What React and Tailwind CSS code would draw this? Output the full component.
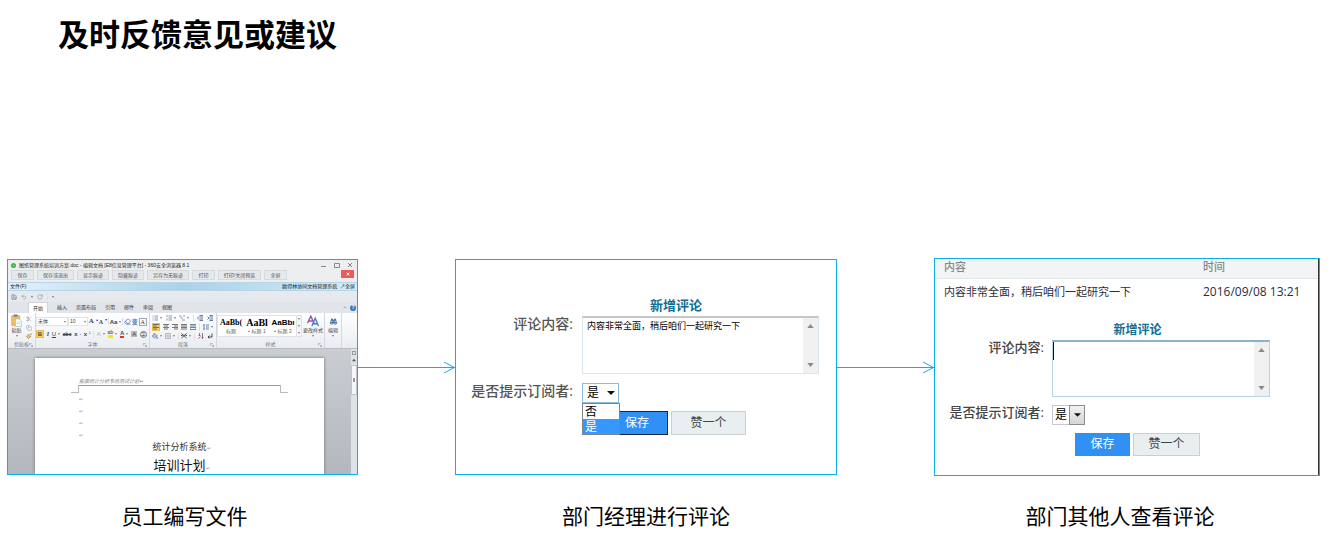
import { Fragment } from "react";
import { Binoculars, Copy, Eraser, Paintbrush, PaintBucket, RotateCw, Save, Scissors, Undo2 } from "lucide-react";

const SANS = "font-['Open_Sans','Noto_Sans_CJK_SC',sans-serif]";

const WINDOW_BUTTONS = [
  { label: "保存", width: "w-[23px]" },
  { label: "保存或退出", width: "w-[37px]" },
  { label: "显示痕迹", width: "w-8" },
  { label: "隐藏痕迹", width: "w-8" },
  { label: "另存为无痕迹", width: "w-[42px]" },
  { label: "打印", width: "w-[23px]" },
  { label: "打印/关闭预览", width: "w-[43px]" },
  { label: "全屏", width: "w-[23px]" },
];

const RIBBON_TABS = ["插入", "页面布局", "引用", "邮件", "审阅", "视图"];

const STYLES = [
  { sample: "AaBb(", name: "标题", font: "font-['Liberation_Serif',serif] text-[8px]" },
  { sample: "AaBl", name: "▪ 标题 1", font: "font-['Liberation_Serif',serif] text-[10px]" },
  { sample: "AaBbı", name: "▪ 标题 2", font: "font-['Liberation_Sans',sans-serif] text-[8px]" },
];

/* Ribbon pieces */

function Caret() {
  return (
    <svg viewBox="0 0 4 3" className="w-[2px] h-[2px] shrink-0" aria-hidden="true">
      <path d="M0 0h4L2 3z" fill="#555" />
    </svg>
  );
}

function Divider() {
  return <span className="w-px h-[7px] bg-[#dcdfe3] shrink-0" />;
}

function Tool({ label, active, caret, children }) {
  return (
    <button
      aria-label={label}
      className={`flex items-center justify-center gap-[2px] h-[8px] shrink-0 text-[6px] leading-none ${
        active ? "w-[8px] bg-[#fbd45c] border border-[#e9bd55]" : ""
      }`}
    >
      {children}
      {caret && <Caret />}
    </button>
  );
}

function Lines({ d, color = "#555" }) {
  return (
    <svg viewBox="0 0 12 12" className="w-[6px] h-[6px] shrink-0" fill="none" stroke={color} strokeWidth="1.6" aria-hidden="true">
      <path d={d} />
    </svg>
  );
}

function Group({ name, className, children }) {
  return (
    <div className={`flex flex-col border-r border-[#d5d9de] ${className}`}>
      <div className="flex-1 min-h-0">{children}</div>
      <div className="relative h-[7px] text-center text-[5px] leading-[7px] text-[#777]">
        {name}
        {name && (
          <svg viewBox="0 0 6 6" className="absolute right-[2px] top-[2px] w-[4px] h-[4px]" fill="none" stroke="#999" aria-hidden="true">
            <path d="M.5 4V.5H4M2.500 2.500l3 3M5.500 3v2.500H3" />
          </svg>
        )}
      </div>
    </div>
  );
}

function Ribbon() {
  return (
    <div className="flex h-[36px] bg-linear-to-b from-white to-[#e9ecf0] border-b border-[#b9bdc2] text-[#444]">
      <Group name="剪贴板" className="w-[28px]">
        <div className="flex justify-between h-full px-[3px] pt-[1px]">
          <button className="flex flex-col items-center text-[5px] leading-[6px]">
            <svg viewBox="0 0 20 24" className="w-[11px] h-[13px]" aria-hidden="true">
              <rect x="1" y="3" width="15" height="18" rx="1" fill="#f2c063" stroke="#cf9838" />
              <rect x="5" y="1" width="7" height="4" fill="#777f8b" />
              <path d="M8 9h7l4 4v10H8z" fill="#fff" stroke="#8fa6c4" />
              <path d="M10 15h7M10 18h7" stroke="#a9bcd4" />
            </svg>
            粘贴
            <span className="mt-[2px]"><Caret /></span>
          </button>
          <div className="flex flex-col justify-between py-[1px]">
            <Tool label="剪切"><Scissors size={6} color="#8a8f96" /></Tool>
            <Tool label="复制"><Copy size={6} color="#9a9fa6" /></Tool>
            <Tool label="格式刷"><Paintbrush size={6} color="#c28a2c" strokeWidth={3} /></Tool>
          </div>
        </div>
      </Group>

      <Group name="字体" className="w-[114px]">
        <div className="flex flex-col gap-[4px] pt-[4px] pr-[2px]">
          <div className="flex items-center justify-between">
            <div className="flex">
              <button className="flex items-center justify-between w-[32px] h-[9px] px-[1px] bg-white border border-[#e1e4e8] text-[5px]">
                宋体 <Caret />
              </button>
              <button className="flex items-center justify-between w-[20px] h-[9px] px-[1px] bg-white border border-[#e1e4e8] text-[5px]">
                10 <Caret />
              </button>
            </div>
            <Tool label="增大字体"><b className="text-[7px] font-['Liberation_Serif',serif]">A</b><sup className="text-[4px] text-blue-700">▴</sup></Tool>
            <Tool label="缩小字体"><b className="font-['Liberation_Serif',serif]">A</b><sup className="text-[4px] text-blue-700">▾</sup></Tool>
            <Divider />
            <Tool label="更改大小写" caret><b>Aa</b></Tool>
            <Divider />
            <Tool label="清除格式"><Eraser size={7} color="#5c87c2" strokeWidth={3} /></Tool>
            <Tool label="拼音指南"><b className="text-[#3a6fb5]">变</b></Tool>
            <Tool label="字符边框"><span className="border border-[#9aa9c0] px-[1px] font-['Liberation_Serif',serif]">A</span></Tool>
          </div>
          <div className="flex items-center justify-between">
            <Tool label="加粗" active><b>B</b></Tool>
            <Tool label="倾斜"><i className="font-bold font-['Liberation_Serif',serif]">I</i></Tool>
            <Tool label="下划线" caret><u>U</u></Tool>
            <Tool label="删除线"><s className="font-bold text-[5px]">abc</s></Tool>
            <Tool label="下标"><b>x</b><span className="text-[4px] text-blue-700">₂</span></Tool>
            <Tool label="上标"><b>x</b><span className="text-[4px] text-blue-700">²</span></Tool>
            <Divider />
            <Tool label="文本效果" caret><span className="text-[#a8b0bb]">A</span></Tool>
            <Tool label="突出显示" caret><b className="border-b-3 border-[#f6e51e] text-[#666] text-[5px]">ab</b></Tool>
            <Tool label="字体颜色" caret><b className="border-b-2 border-[#e33128] text-[#36507c]">A</b></Tool>
            <Tool label="字符底纹"><span className="bg-[#bbb] px-[1px]">A</span></Tool>
            <Tool label="带圈字符"><span className="rounded-full border border-[#777] text-[5px]">字</span></Tool>
          </div>
        </div>
      </Group>

      <Group name="段落" className="w-[67px]">
        <div className="flex flex-col gap-[1px] pt-[1px] pl-[2px] pr-[3px]">
          <div className="flex items-center justify-between">
            <Tool label="项目符号" caret><Lines d="M1 2h2M1 6h2M1 10h2M5 2h7M5 6h7M5 10h7" color="#6581a8" /></Tool>
            <Tool label="编号" caret><Lines d="M2 0v4M2 7v4M5 2h7M5 6h7M5 10h7" color="#6581a8" /></Tool>
            <Tool label="多级列表" caret><Lines d="M0 2h5M3 6h5M6 10h6M8 2h4" color="#6581a8" /></Tool>
            <Divider />
            <Tool label="减少缩进"><Lines d="M5 1h7M5 4h7M5 8h7M5 11h7M4 3L1 6l3 3" color="#3a5a8c" /></Tool>
            <Tool label="增加缩进"><Lines d="M5 1h7M5 4h7M5 8h7M5 11h7M1 3l3 3-3 3" color="#3a5a8c" /></Tool>
          </div>
          <div className="flex items-center justify-between">
            <Tool label="左对齐" active><Lines d="M0 1h12M0 4h8M0 7h12M0 10h8" /></Tool>
            <Tool label="居中"><Lines d="M0 1h12M2 4h8M0 7h12M2 10h8" /></Tool>
            <Tool label="右对齐"><Lines d="M0 1h12M4 4h8M0 7h12M4 10h8" /></Tool>
            <Tool label="两端对齐"><Lines d="M0 1h12M0 4h12M0 7h12M0 10h12" /></Tool>
            <Tool label="分散对齐"><Lines d="M0 1h12M0 4h12M0 7h12M1 9v3M11 9v3M1 11h10" color="#466797" /></Tool>
            <Divider />
            <Tool label="行距" caret><Lines d="M2 1v10M0 3l2-2 2 2M0 9l2 2 2-2M6 2h6M6 6h6M6 10h6" color="#466797" /></Tool>
          </div>
          <div className="flex items-center justify-between">
            <Tool label="底纹" caret><PaintBucket size={6} color="#55749f" strokeWidth={3} /></Tool>
            <Tool label="边框" caret><Lines d="M1 1h10v10H1zM6 1v10M1 6h10" color="#aaa" /></Tool>
            <Divider />
            <Tool label="中文版式" caret><Lines d="M1 1l10 9M11 1L1 10M0 5h3M9 5h3" color="#222" /></Tool>
            <Divider />
            <Tool label="排序"><Lines d="M3 0v5M1 5h4M1 11l4-4M9 0v11M7 9l2 2 2-2" color="#7d4b78" /></Tool>
            <Tool label="编辑标记"><Lines d="M10 1v7H3M5 5L2 8l3 3" color="#222" /></Tool>
          </div>
        </div>
      </Group>

      <Group name="样式" className="flex-1">
        <div className="flex h-full pt-[2px]">
          <div className="flex flex-1 h-[22px] bg-white border border-[#dfe2e6] overflow-hidden">
            {STYLES.map((s) => (
              <button key={s.name} className="flex-1 min-w-0 text-[5px] leading-[7px] text-[#666]">
                <span className={`block h-[11px] leading-[11px] font-bold text-black whitespace-nowrap overflow-hidden ${s.font}`}>{s.sample}</span>
                {s.name}
              </button>
            ))}
            <div className="flex flex-col justify-around items-center w-[5px] bg-[#f3f5f7] border-l border-[#dfe2e6]">
              <Caret />
              <Caret />
              <Caret />
            </div>
          </div>
          <button className="flex flex-col items-center w-[22px] text-[5px] leading-[6px] whitespace-nowrap">
            <svg viewBox="0 0 22 20" className="w-[12px] h-[12px]" fill="none" strokeWidth="2.500" aria-hidden="true">
              <path d="M1 14L7 1l6 13M3 10h8" stroke="#a54fb5" />
              <path d="M9 19l6-14 6 14M11 15h8" stroke="#3f7fd0" />
            </svg>
            更改样式
            <span className="mt-[2px]"><Caret /></span>
          </button>
        </div>
      </Group>

      <Group name="" className="w-[17px]">
        <button className="flex flex-col items-center w-full pt-[2px] text-[5px] leading-[6px]">
          <span className="flex items-center h-[12px]"><Binoculars size={7} color="#2f6190" strokeWidth={3} /></span>
          编辑
          <span className="mt-[2px]"><Caret /></span>
        </button>
      </Group>
      <div className="w-[15px]" />
    </div>
  );
}

function EditorPanel() {
  return (
    <section className="flex flex-col h-[216px] border border-[#0eaeea] bg-[#eceef0] overflow-hidden font-['Liberation_Sans','Noto_Sans_CJK_SC',sans-serif] text-[5px] leading-none text-[#333]">
      <div className="flex items-center h-[10px] px-[3px] gap-[3px]">
        <span className="w-[5px] h-[5px] rounded-full border-2 border-[#43b649]" />
        <span className="whitespace-nowrap text-[#222]">图纸管理系统培训方案.doc - 编辑文档 [E8信息管理平台] - 360安全浏览器 8.1</span>
        <svg viewBox="0 0 34 6" className="ml-auto w-[34px] h-[6px]" fill="none" stroke="#888" aria-hidden="true">
          <path d="M1 4.500h5M14.500 1.500h5v4h-5zM28 1l4 4M32 1l-4 4" />
        </svg>
      </div>

      <div className="flex items-start h-[12px] pl-[3px] pr-[3px] gap-[3px]">
        {WINDOW_BUTTONS.map((b) => (
          <button key={b.label} className={`h-[10px] bg-[#e5e9ec] border border-[#d6dadd] whitespace-nowrap text-[#555] leading-[8px] ${b.width}`}>
            {b.label}
          </button>
        ))}
        <button aria-label="关闭" className="flex items-center justify-center ml-auto w-[13px] h-[8px] bg-[#ee5a5a]">
          <svg viewBox="0 0 6 6" className="w-[4px] h-[4px]" stroke="#fff" strokeWidth="1.500" aria-hidden="true">
            <path d="M1 1l4 4M5 1L1 5" />
          </svg>
        </button>
      </div>

      <div className="flex items-center justify-between h-[9px] px-[2px] bg-linear-to-r from-[#e2f1fa] via-[#a9d2ea] to-[#d5eaf6] border-y border-[#b9d5e4] text-[#123]">
        <span>文件(F)</span>
        <span>欧得林协同文档管理系统&nbsp; ↗全屏</span>
      </div>

      <div className="flex items-center gap-[4px] h-[11px] px-[3px] bg-[#e6e9ed]">
        <Save size={6} color="#8b8f96" strokeWidth={3} />
        <Undo2 size={6} color="#a0a4aa" strokeWidth={3} />
        <Caret />
        <RotateCw size={6} color="#a0a4aa" strokeWidth={3} />
        <Divider />
        <Caret />
      </div>

      <div className="flex items-center h-[11px] pl-[20px] pr-[1px] bg-[#e1e4e8] gap-[9px] text-[#333]">
        <button className="w-[20px] h-full bg-white border-x border-t border-[#d0d4d9]">开始</button>
        {RIBBON_TABS.map((tab) => (
          <button key={tab} className="whitespace-nowrap">{tab}</button>
        ))}
        <span className="ml-auto flex items-center gap-[3px]">
          <svg viewBox="0 0 6 4" className="w-[4px] h-[3px]" fill="none" stroke="#888" aria-hidden="true">
            <path d="M1 3l2-2 2 2" />
          </svg>
          <span className="flex items-center justify-center w-[6px] h-[6px] rounded-full bg-[#3475c8] text-white font-bold">?</span>
        </span>
      </div>

      <Ribbon />

      <div className="flex flex-1 min-h-0 bg-linear-to-b from-[#caced3] to-[#b4b8be]">
        <div className="flex flex-1 pl-[27px] pr-[27px] pt-[9px]">
          <div className="flex-1 bg-white shadow-[0_0_3px_#666] pt-[20px] px-[36px]">
            <p className="pl-[8px] h-[7px] leading-[7px] italic text-[#888] font-['Liberation_Serif','Noto_Sans_CJK_SC',serif]">股票统计分析系统测试计划↵</p>
            <div className="flex h-[8px]">
              <span className="w-[8px] border-b border-r border-[#bbb]" />
              <span className="flex-1 border-t border-[#999]" />
              <span className="w-[8px] border-b border-l border-[#bbb]" />
            </div>
            <div className="pl-[8px] text-[#999]">
              {[0, 1, 2, 3].map((n) => (
                <p key={n} className="h-[12px] leading-[12px]">↵</p>
              ))}
            </div>
            <p className="pl-1 text-center text-[9px] leading-[12px]">统计分析系统<span className="text-[5px] text-[#999]">↵</span></p>
            <p className="pl-1 pt-1 text-center text-[13px] leading-[16px] text-[#111]">培训计划<span className="text-[5px] text-[#999]">↵</span></p>
          </div>
        </div>
        <div className="flex flex-col items-center w-[6px] bg-[#dfe3e8]">
          <span className="w-[4px] h-[4px] mt-[2px] border border-[#999]" />
          <svg viewBox="0 0 6 6" className="w-[4px] h-[6px] my-[2px]" aria-hidden="true">
            <path d="M0 5h6L3 1z" fill="#555" />
          </svg>
          <span className="flex items-center justify-center w-full h-[30px] bg-[#f6f7f9] border border-[#bfc4ca]">
            <span className="w-[2px] h-[4px] bg-[#999]" />
          </span>
        </div>
      </div>
    </section>
  );
}

/* Comment form, shared by both comment panels */

function Scrollbar() {
  return (
    <div className="flex flex-col justify-between items-center w-[15px] py-[6px] bg-[#f0f0f0]">
      <svg viewBox="0 0 8 5" className="w-[7px] h-[4px]" aria-hidden="true"><path d="M0 5h8L4 0z" fill="#8a8a8a" /></svg>
      <svg viewBox="0 0 8 5" className="w-[7px] h-[4px]" aria-hidden="true"><path d="M0 0h8L4 5z" fill="#8a8a8a" /></svg>
    </div>
  );
}

function CommentPanel() {
  return (
    <section className={`h-[216px] border border-[#0eaeea] bg-white pt-9 pl-[13px] pr-[17px] ${SANS}`}>
      <h2 className="pl-16 pb-[2px] text-center text-[13px] leading-[18px] font-bold text-[#116d92]">新增评论</h2>
      <div className="grid grid-cols-[104px_1fr] gap-x-[9px] gap-y-[9px]">
        <label htmlFor="comment" className="text-right text-[14px] leading-4 font-medium text-[#555]">评论内容:</label>
        <div className="flex h-[58px] border border-[#dde5ee] border-t-2 border-t-[#c3c6ca]">
          <textarea
            id="comment"
            defaultValue="内容非常全面，稍后咱们一起研究一下"
            className="flex-1 min-w-0 px-1 pt-[2px] resize-none overflow-hidden outline-none text-[9px] leading-3 text-black"
          />
          <Scrollbar />
        </div>
        <label htmlFor="notify" className="text-right text-[14px] leading-4 font-medium text-[#555]">是否提示订阅者:</label>
        <div className="relative w-[37px]">
          <select id="notify" defaultValue="是" className="block appearance-none w-full h-5 pl-1 border border-[#8bbcdc] bg-white text-[12px] leading-4 text-black">
            <option>否</option>
            <option>是</option>
          </select>
          <svg viewBox="0 0 8 4" className="absolute right-1 top-2 w-2 h-1 pointer-events-none" aria-hidden="true"><path d="M0 0h8L4 4z" fill="#111" /></svg>
          <ul className="absolute left-0 top-5 z-10 w-[38px] border border-[#7d838a] bg-white text-[12px] leading-[15px]">
            <li className="px-[2px] text-black">否</li>
            <li className="px-[2px] bg-[#3399ff] text-white outline-1 -outline-offset-1 outline-dotted outline-[#a78355]">是</li>
          </ul>
        </div>
      </div>
      <div className="flex justify-center gap-[3px] pl-16 pt-2">
        <button className="w-[62px] h-6 border border-[#12283f] bg-[#3190f3] text-[12px] leading-none text-white">保存</button>
        <button className="w-[75px] h-6 border border-[#cbcfd2] bg-[#e9eef1] text-[12px] leading-none text-[#444]">赞一个</button>
      </div>
    </section>
  );
}

function ReviewPanel() {
  return (
    <section className={`h-[218px] border border-[#0eaeea] bg-white ${SANS}`}>
      <div className="h-full border-r border-[#333]">
        <table className="w-full table-fixed text-left">
          <thead>
            <tr className="h-[19px] bg-[#f2f4f6] border-b border-[#e0e7e8] text-[11px] leading-4 text-[#888]">
              <th className="pl-[9px] pb-[3px] py-0 font-medium">内容</th>
              <th className="w-[115px] pb-[3px] py-0 font-medium">时间</th>
            </tr>
          </thead>
          <tbody>
            <tr className="h-[27px] text-[#2c2c3a]">
              <td className="pl-[9px] py-0 text-[11px] leading-4">内容非常全面，稍后咱们一起研究一下</td>
              <td className="py-0 text-[12px] leading-4">2016/09/08 13:21</td>
            </tr>
          </tbody>
        </table>
        <div className="pt-[14px] pl-[14px] pr-12">
          <h2 className="pl-14 text-center text-[12px] leading-5 font-bold text-[#116d92]">新增评论</h2>
          <div className="grid grid-cols-[95px_1fr] gap-2">
            <label htmlFor="reply" className="text-right text-[13px] leading-[14px] font-medium text-[#444]">评论内容:</label>
            <div className="flex h-[57px] border border-[#b5d5e8] border-t-2 border-t-[#8ab2cf]">
              <textarea
                id="reply"
                autoFocus
                className="flex-1 min-w-0 h-[18px] resize-none overflow-hidden outline-none border-l border-[#111] text-[11px] leading-4 caret-transparent"
              />
              <Scrollbar />
            </div>
            <label htmlFor="reply-notify" className="text-right text-[13px] leading-[14px] font-medium text-[#444]">是否提示订阅者:</label>
            <div className="relative w-[33px]">
              <select id="reply-notify" defaultValue="是" className="block appearance-none w-full h-5 pl-[2px] border border-[#c5c8cc] bg-white text-[12px] leading-4 text-black">
                <option>否</option>
                <option>是</option>
              </select>
              <span className="absolute right-0 top-0 flex items-center justify-center w-4 h-5 border border-[#8c8c8c] bg-linear-to-b from-[#f2f2f2] to-[#d5d5d5] pointer-events-none">
                <svg viewBox="0 0 8 4" className="w-[7px] h-1" aria-hidden="true"><path d="M0 0h8L4 4z" fill="#111" /></svg>
              </span>
            </div>
          </div>
          <div className="flex justify-center gap-[3px] pl-14 pt-2">
            <button className="w-[55px] h-[23px] bg-[#3190f3] text-[12px] leading-none text-white">保存</button>
            <button className="w-[67px] h-[23px] border border-[#cbcfd2] bg-[#e9eef1] text-[12px] leading-none text-[#444]">赞一个</button>
          </div>
        </div>
      </div>
    </section>
  );
}

function Arrow() {
  return (
    <div className="flex items-center">
      <span className="flex-1 h-px bg-[#0eaeea]" />
      <svg viewBox="0 0 11 13" className="w-[11px] h-[13px] shrink-0" fill="none" stroke="#0eaeea" aria-hidden="true">
        <path d="M0 6.500h11M0 1l10.500 5.500L0 12" />
      </svg>
    </div>
  );
}

const STEPS = [
  { title: "员工编写文件", panel: <EditorPanel />, shift: "pl-1" },
  { title: "部门经理进行评论", panel: <CommentPanel />, shift: "" },
  { title: "部门其他人查看评论", panel: <ReviewPanel />, shift: "pr-3.5" },
];

export default function App() {
  return (
    <main className={`bg-white pt-[14px] pb-[15px] pl-[7px] pr-3 text-black ${SANS}`}>
      <h1 className="pl-[51px] pb-[204px] text-[31px] leading-10 font-bold">及时反馈意见或建议</h1>
      <div className="grid grid-cols-[351fr_97fr_382fr_97fr_386fr] items-center gap-y-6">
        {STEPS.map((step, i) => (
          <Fragment key={step.title}>
            {i > 0 && <Arrow />}
            {step.panel}
          </Fragment>
        ))}
        {STEPS.map((step, i) => (
          <Fragment key={step.title}>
            {i > 0 && <span />}
            <p className={`text-center text-[21px] leading-8 whitespace-nowrap ${step.shift}`}>{step.title}</p>
          </Fragment>
        ))}
      </div>
    </main>
  );
}
